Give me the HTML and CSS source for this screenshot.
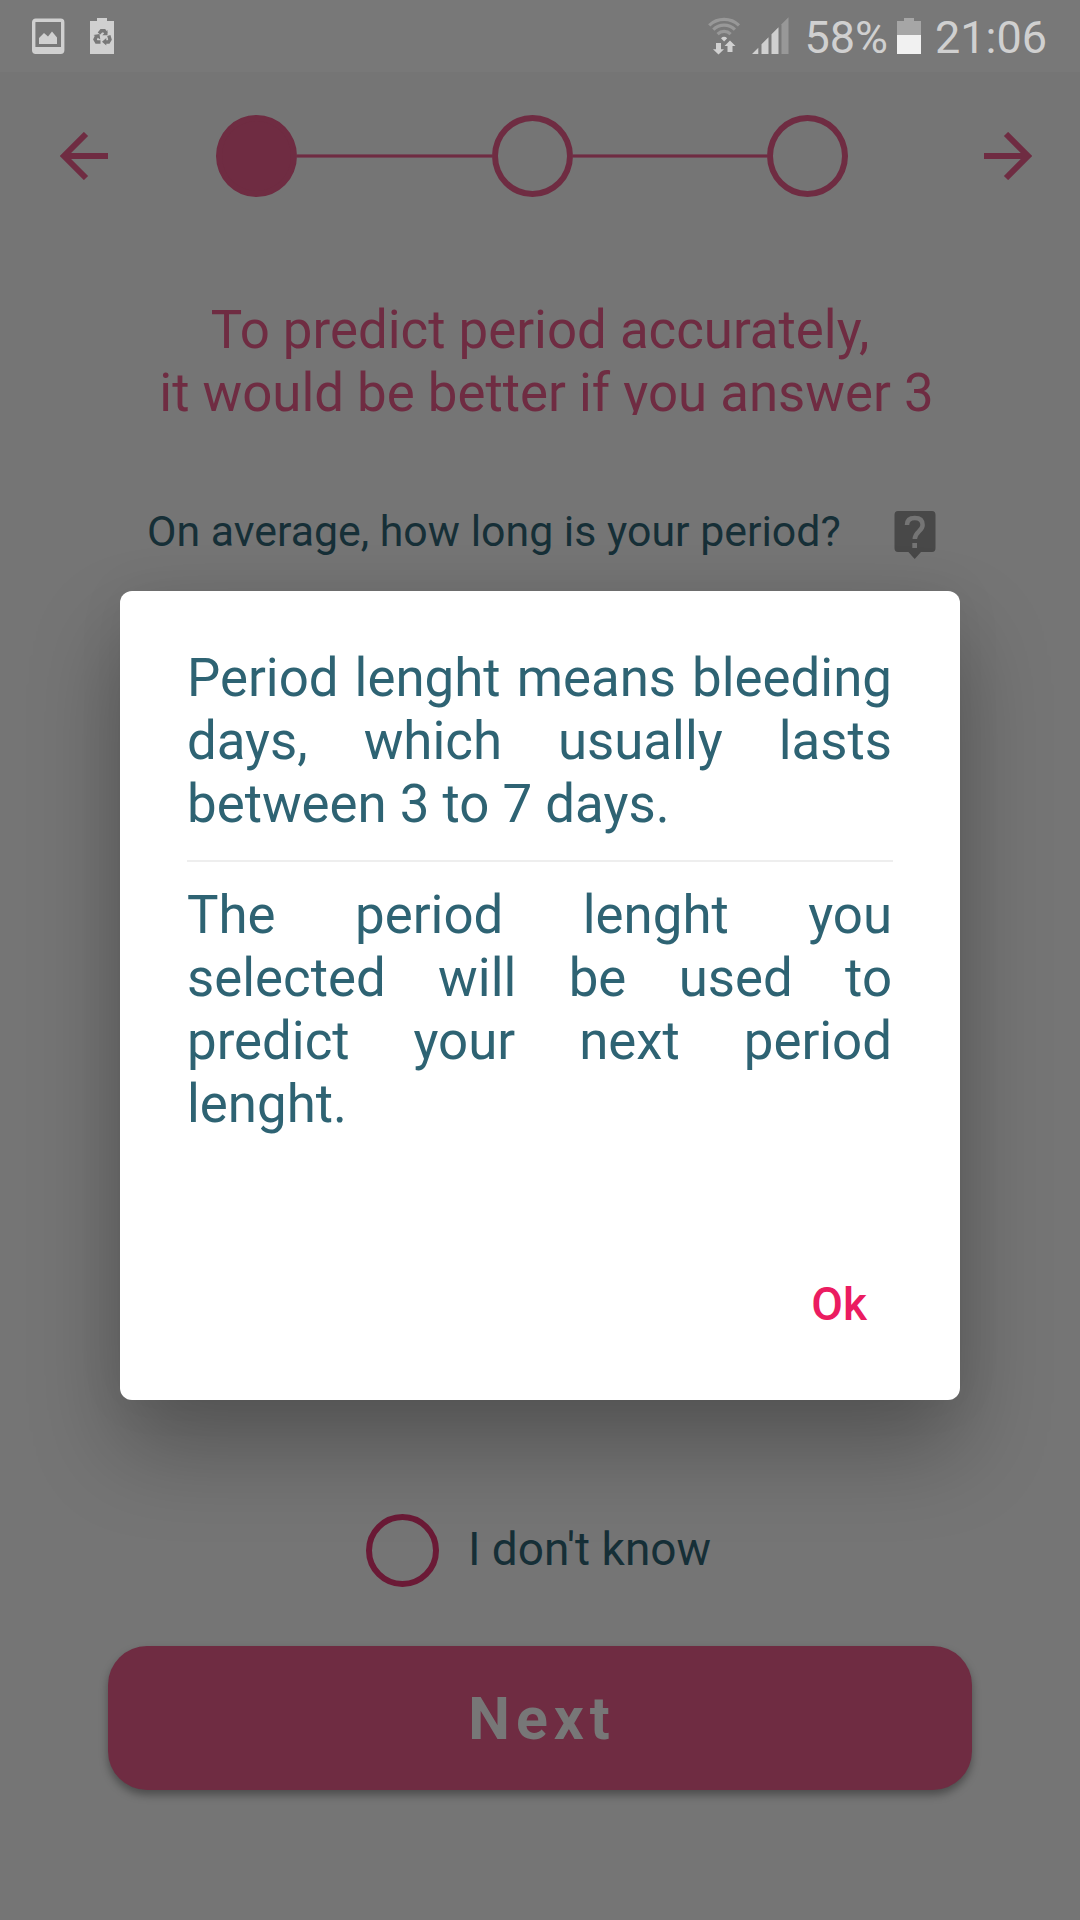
FILE: index.html
```html
<!DOCTYPE html>
<html lang="en">
<head>
<meta charset="utf-8">
<title>Period setup</title>
<link rel="stylesheet" href="styles.css">
</head>
<body>
<div class="screen">
  <header class="status">
    <svg class="status-left" width="88" height="36" viewBox="0 0 88 36">
      <rect x="1.7" y="2.2" width="29" height="32" rx="2" fill="none" stroke="#d0d0d0" stroke-width="3.4"/>
      <path d="M2 29h28v5H2zM7 26v-6l5-5 4 3.500 4-5 5 6V26z" fill="#d0d0d0"/>
      <path d="M58 3h7V0h10v3h7v33H58z" fill="#d0d0d0"/>
      <path d="M67 15.500 69.300 12.800h3l1.900 2.700M64.700 17.800 63 21.500l1.500 2.500h4M76.800 17.500l1.200 4-1.500 2.500H73" fill="none" stroke="#787878" stroke-width="3.400"/>
      <path d="M75.500 12v5.200h-5.200zM61.500 17l6-1 .8 5.500zM74.300 20v7.500l-4.300-3.700z" fill="#787878"/>
    </svg>
    <div class="status-right">
      <svg class="signal" width="82" height="40" viewBox="0 0 82 40">
        <g fill="none" stroke="#989898" stroke-width="3.200">
          <path d="M1.200 9.300a21.500 21.500 0 0 1 29.800 0M5.300 13.600a15.500 15.500 0 0 1 21.600 0M9.600 18.100a9.300 9.300 0 0 1 13 0"/>
        </g>
        <path d="M13 22.300a4.500 4.500 0 0 1 6.200 0l-3.100 3.200zM8 27h5v6.200h3L10.500 38.500 5 33.200h3zM19.500 36h5v-6h3L22 24.600 16.500 30h3z" fill="#d0d0d0"/>
        <path d="M44 38 50.300 31.700V38zM53.500 38V28.200l7-7V38zM63.500 38V18.200l7-7V38z" fill="#d0d0d0"/>
        <path d="M73.500 38V8.200l7-7V38z" fill="#989898"/>
      </svg>
      <span>58%</span>
      <svg class="battery" width="24" height="36" viewBox="0 0 24 36">
        <path d="M0 3h7V0h10v3h7v14H0z" fill="#a6a6a6"/><path d="M0 17h24v19H0z" fill="#f1f1f1"/>
      </svg>
      <span>21:06</span>
    </div>
  </header>

  <nav class="steps">
    <svg width="48" height="48" viewBox="0 0 48 48"><path d="M48 24H5M26 2 4 24l22 22" class="arrow"/></svg>
    <div class="track">
      <span class="dot dot-on"></span><span class="line"></span><span class="dot"></span><span class="line"></span><span class="dot"></span>
    </div>
    <svg width="48" height="48" viewBox="0 0 48 48"><path d="M0 24h43M22 2l22 22-22 22" class="arrow"/></svg>
  </nav>

  <h1 class="intro">To predict period accurately,<br><span class="second">it would be better if you answer 3</span></h1>

  <div class="question">
    <span>On average, how long is your period?</span>
    <svg width="42" height="48" viewBox="0 0 42 48">
      <path d="M4 0h34q3.500 0 3.500 4v33q0 4-3.500 4H27l-6.300 7-6.300-7H4q-3.500 0-3.500-4V4Q.500 0 4 0z" fill="#484848"/>
      <path d="M13 14q0-7 7.800-7t7.800 7c0 6-7.800 7-7.800 14" fill="none" stroke="#747474" stroke-width="4.500"/>
      <path d="M18.300 32h4.700v5h-4.700z" fill="#747474"/>
    </svg>
  </div>

  <main class="dialog">
    <p>Period lenght means bleeding days, which usually lasts between 3 to 7 days.</p>
    <hr>
    <p>The period lenght you selected will be used to predict your next period lenght.</p>
    <button class="ok">Ok</button>
  </main>

  <label class="unknown"><span class="radio"></span><span class="unknown-text">I don't know</span></label>
  <button class="next">Next</button>
</div>
</body>
</html>
```
FILE: styles.css
```css
* { box-sizing: border-box; }
body { margin: 0; background: #757575; font-family: Roboto, "Liberation Sans", sans-serif; }
button { border: 0; padding: 0; font-family: inherit; background: none; }
.screen { width: 1080px; height: 1920px; display: flex; flex-direction: column; align-items: center; overflow: hidden; }
.status { width: 1080px; height: 72px; flex: none; background: #787878; display: flex; justify-content: space-between; padding: 0 33px 0 32px; color: #d0d0d0; font-size: 45px; line-height: 75px; }
.status-left { margin-top: 18px; }
.status-right { display: flex; }
.signal { margin: 16px 14px 0 0; }
.battery { margin: 18px 14px 0 9px; }
.steps { width: 984px; height: 82px; margin-top: 43px; flex: none; display: flex; align-items: center; justify-content: space-between; padding: 0 0 0 12px; }
.arrow { fill: none; stroke: #6f2c42; stroke-width: 6; }
.track { width: 660px; display: flex; align-items: center; padding-right: 28px; }
.dot { width: 81px; height: 82px; flex: none; border: 6px solid #6f2c42; border-radius: 50%; }
.dot-on { background: #6f2c42; }
.line { flex: 1; height: 4px; background: #6f2c42; border: solid #724958; border-width: 1px 0; }
.intro { margin: 102px 0 0; height: 116px; flex: none; overflow: hidden; text-align: center; font-size: 52.8px; line-height: 63px; font-weight: 400; color: #6f2c42; white-space: nowrap; }
.second { padding-left: 13px; }
.question { width: 790px; height: 50px; flex: none; margin-top: 91px; display: flex; align-items: center; justify-content: space-between; color: #162f37; font-size: 42.85px; line-height: 50px; white-space: nowrap; padding-left: 1px; position: relative; left: 1px; }
.question svg { flex: none; margin-top: 8px; }
.dialog { width: 840px; height: 809px; flex: none; margin-top: 35px; background: #fff; border-radius: 12px; padding: 56px 67px 0; position: relative; box-shadow: 0 48px 90px rgba(0,0,0,.28), 0 0 50px rgba(0,0,0,.06); display: flex; flex-direction: column; }
.dialog p { margin: 0 1px 0 0; text-align: justify; font-size: 52.8px; line-height: 63px; color: #2e6373; }
.dialog hr { width: 100%; height: 2px; border: 0; background: #eee; margin: 24px 0 22px; }
.ok { align-self: flex-end; margin: 141px 26px 0 0; font-size: 46px; line-height: 54px; font-weight: 500; color: #eb1c61; }
.unknown { height: 73px; flex: none; margin-top: 114px; display: flex; align-items: center; gap: 29px; color: #162f37; font-size: 46px; padding-right: 3px; }
.unknown-text { padding-bottom: 3px; }
.radio { width: 73px; height: 73px; border: 6px solid #6b1a36; border-radius: 50%; }
.next { width: 864px; height: 144px; flex: none; margin-top: 59px; border-radius: 39px; background: #6f2c42; color: #777; font-size: 59px; font-weight: 700; letter-spacing: 6px; padding-left: 4px; box-shadow: 0 5px 9px rgba(0,0,0,.35); }
```
